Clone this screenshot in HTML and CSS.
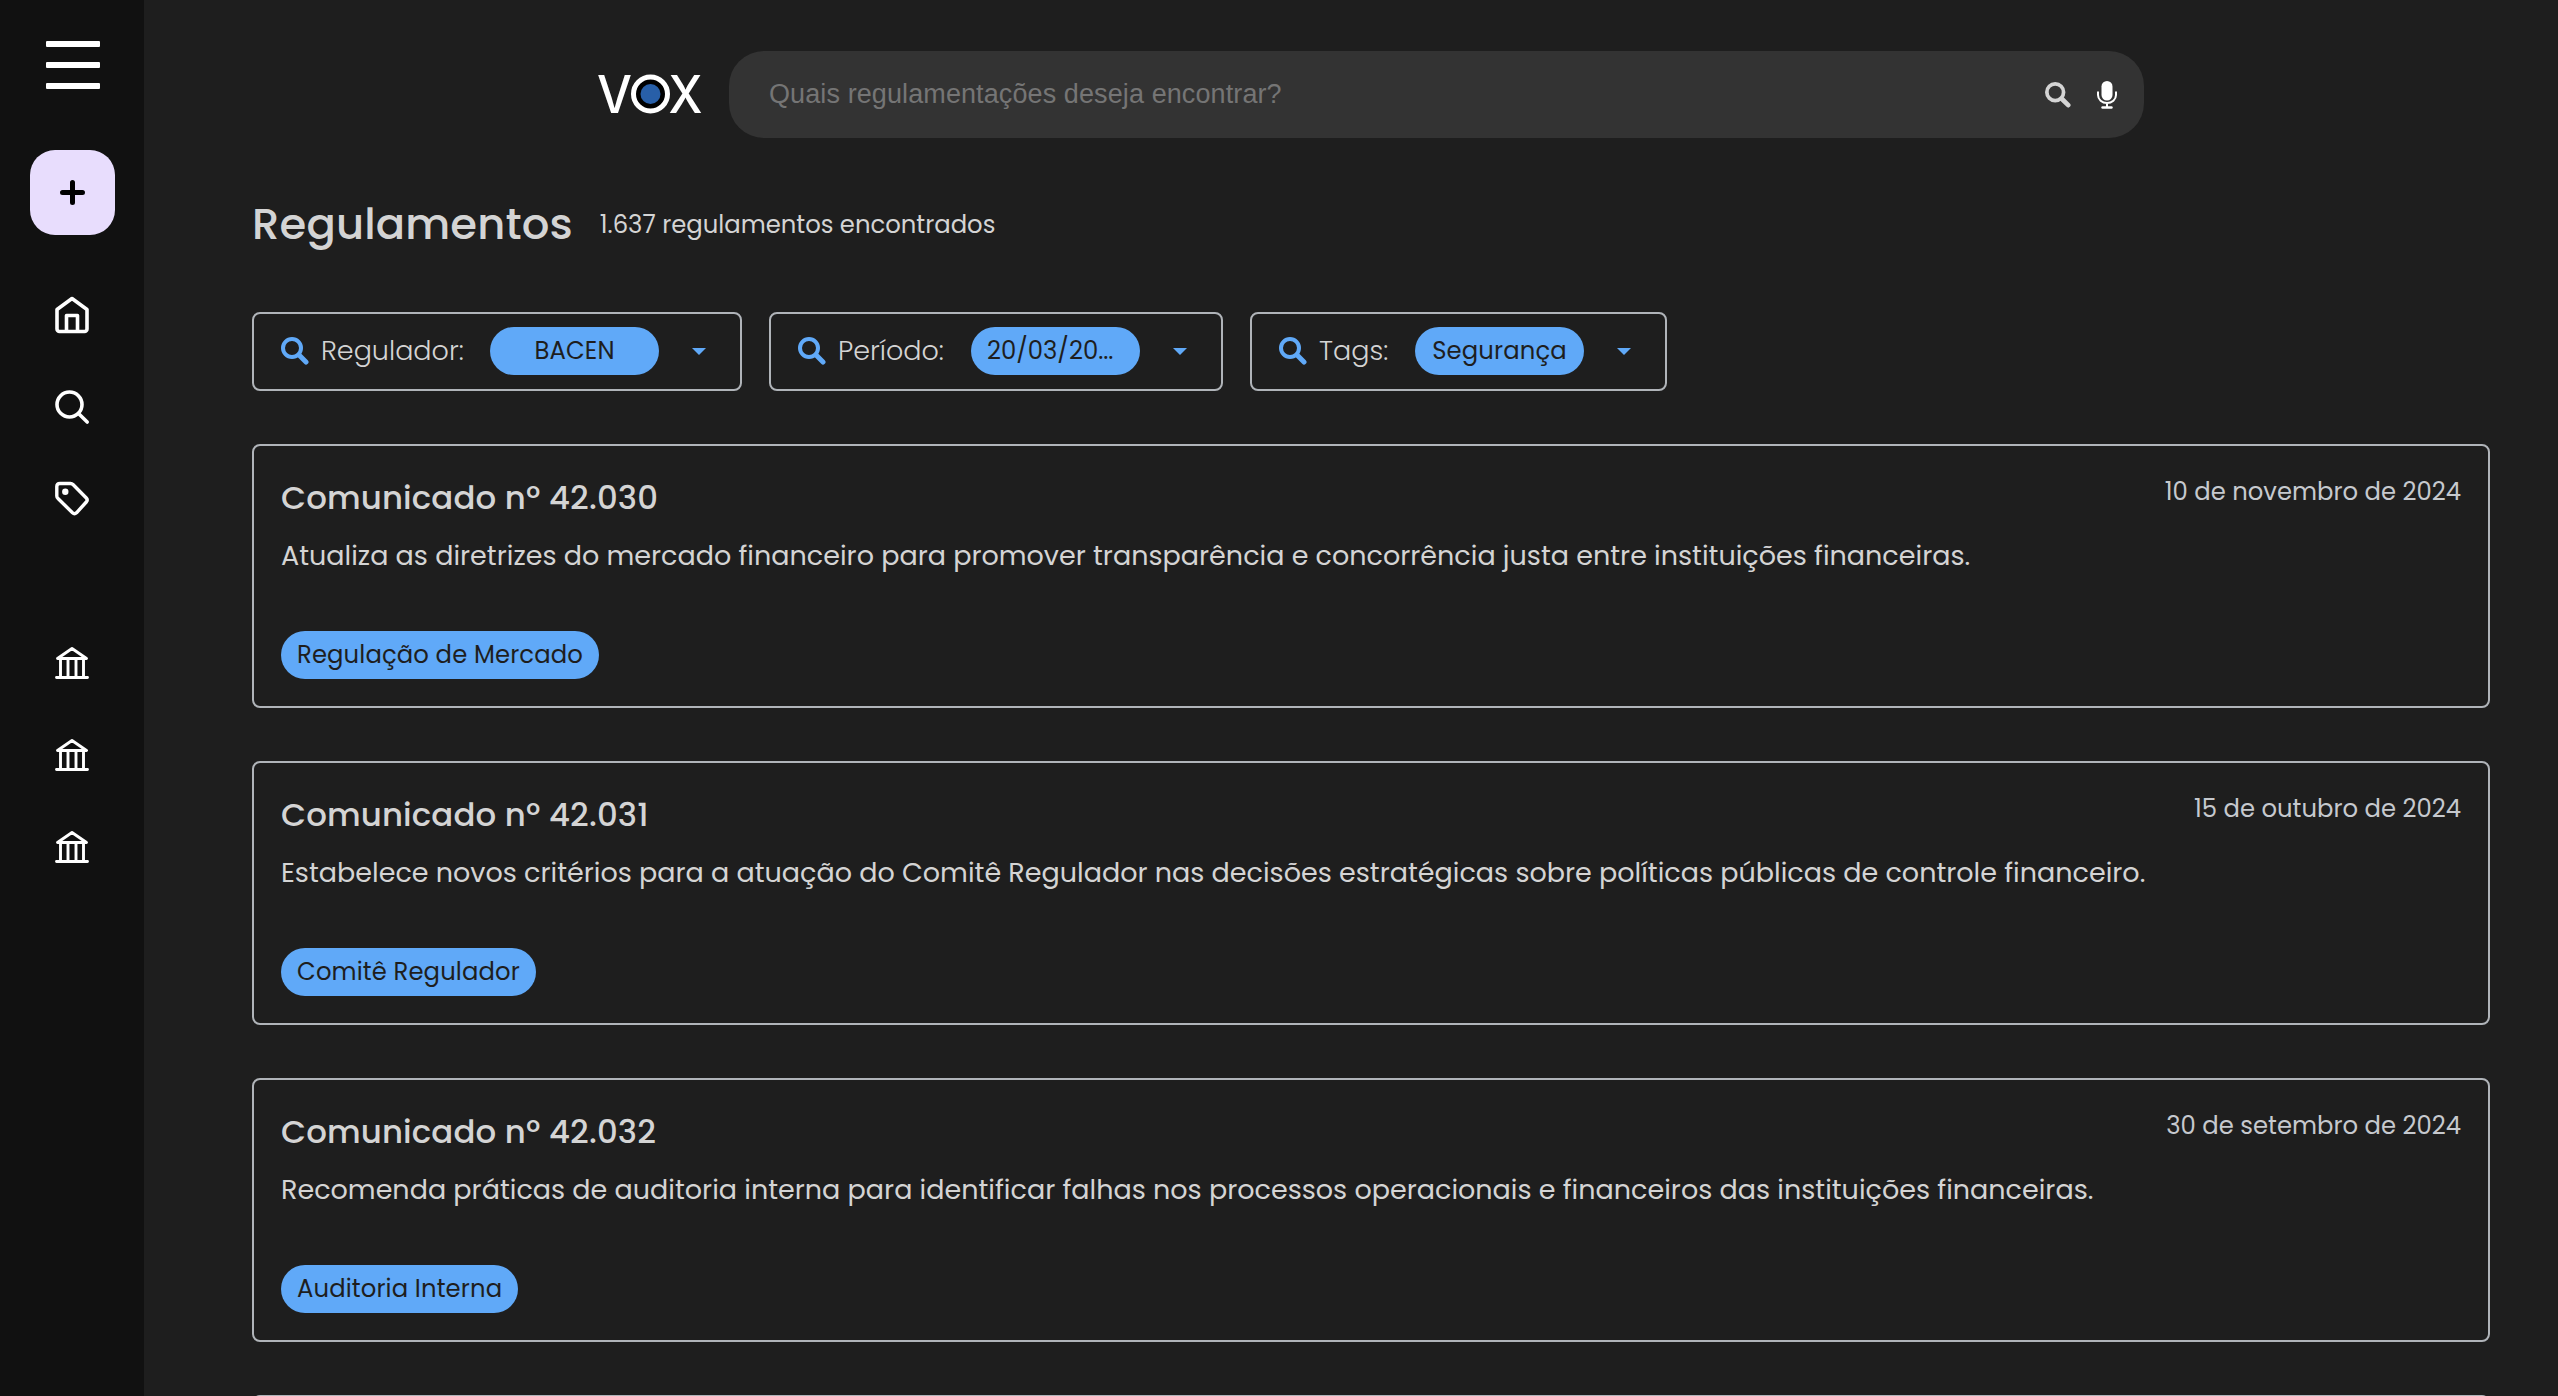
FILE: index.html
```html
<!DOCTYPE html>
<html lang="pt-BR">
<head>
<meta charset="utf-8">
<title>VOX – Regulamentos</title>
<link rel="stylesheet" href="styles.css">
</head>
<body>
<svg class="defs" aria-hidden="true">
  <symbol id="bank" viewBox="0 0 34 34">
    <path d="M2.500 12.500 17 2.500l14.500 10zM5.500 13v18M13 13v18M21 13v18M28.500 13v18M1.500 31.500h31" fill="none" stroke="currentColor" stroke-width="2.900" stroke-linejoin="round" stroke-linecap="round"/>
  </symbol>
  <symbol id="lens" viewBox="0 0 28 28">
    <circle cx="11" cy="11" r="9" fill="none" stroke="currentColor" stroke-width="4"/>
    <path d="M18.300 18.300 25 25" fill="none" stroke="currentColor" stroke-width="5" stroke-linecap="round"/>
  </symbol>
  <symbol id="caret" viewBox="0 0 14 7"><path d="M0 0h14L7 7z" fill="currentColor"/></symbol>
</svg>
<aside class="sidebar">
  <button class="burger" aria-label="Menu"><span></span><span></span><span></span></button>
  <button class="add" aria-label="Adicionar">
    <svg width="25" height="25" viewBox="0 0 25 25"><path d="M12.500 2.500v20M2.500 12.500h20" stroke="#000" stroke-width="5" stroke-linecap="round"/></svg>
  </button>
  <nav class="nav">
    <svg width="36" height="38" viewBox="0 0 36 38" fill="none" stroke="#fff" stroke-width="3.600" stroke-linejoin="round"><path d="M3 13.500 18 2.500l15 11V33a2.500 2.500 0 0 1-2.500 2.500h-25A2.500 2.500 0 0 1 3 33zM12.500 35V19.500h11V35"/></svg>
    <svg width="36" height="38" viewBox="0 0 36 38" fill="none" stroke="#fff" stroke-width="3.600" stroke-linecap="round"><circle cx="15.500" cy="16.500" r="12.500"/><path d="M24.500 25.500 33.200 34"/></svg>
    <svg width="36" height="38" viewBox="0 0 36 38" fill="none" stroke="#fff" stroke-width="3.400" stroke-linejoin="round"><path d="M6 3.500h10.500q1.500 0 2.500 1l13.300 13.500q1.800 2 0 4L22.500 32.800q-2 1.800-4 0L4 18.500q-1.200-1-1.200-2.500V6.500Q2.800 3.500 6 3.500z"/><circle cx="11.300" cy="11.800" r="3.200" fill="#fff" stroke="none"/></svg>
  </nav>
  <nav class="nav banks">
    <svg class="bank"><use href="#bank"/></svg>
    <svg class="bank"><use href="#bank"/></svg>
    <svg class="bank"><use href="#bank"/></svg>
  </nav>
</aside>
<main class="main">
  <header class="topbar">
    <svg class="logo" width="104" height="40" viewBox="0 0 104 40">
      <text x="-1" y="38.500" textLength="35" lengthAdjust="spacingAndGlyphs">V</text>
      <circle cx="52.500" cy="20" r="17" fill="#000" stroke="#fff" stroke-width="5"/>
      <circle cx="52.500" cy="20" r="10" fill="#285fa8"/>
      <text x="70.500" y="38.500" textLength="34" lengthAdjust="spacingAndGlyphs">X</text>
    </svg>
    <div class="search">
      <span class="placeholder">Quais regulamentações deseja encontrar?</span>
      <svg class="search-lens" width="26" height="26"><use href="#lens"/></svg>
      <svg width="20" height="28" viewBox="0 0 20 28" fill="none" stroke="#fff" stroke-width="2"><rect x="4.500" y="0" width="11" height="19.500" rx="5.500" fill="#fff" stroke="none"/><path d="M1 10.500V14a9 8 0 0 0 18 0v-3.500M10 22v4" /><path d="M5.500 26.500h9" stroke-width="2.400" stroke-linecap="round"/></svg>
    </div>
  </header>
  <div class="heading">
    <h1>Regulamentos</h1>
    <span class="count">1.637 regulamentos encontrados</span>
  </div>
  <div class="filters">
    <div class="filter regulator"><svg class="lens"><use href="#lens"/></svg><span class="label">Regulador:</span><span class="pill">BACEN</span><svg class="caret"><use href="#caret"/></svg></div>
    <div class="filter period"><svg class="lens"><use href="#lens"/></svg><span class="label">Período:</span><span class="pill">20/03/20...</span><svg class="caret"><use href="#caret"/></svg></div>
    <div class="filter tags"><svg class="lens"><use href="#lens"/></svg><span class="label">Tags:</span><span class="pill">Segurança</span><svg class="caret"><use href="#caret"/></svg></div>
  </div>
  <section class="list">
    <article class="card">
      <div class="card-head"><h2>Comunicado nº 42.030</h2><time>10 de novembro de 2024</time></div>
      <p>Atualiza as diretrizes do mercado financeiro para promover transparência e concorrência justa entre instituições financeiras.</p>
      <span class="tag">Regulação de Mercado</span>
    </article>
    <article class="card">
      <div class="card-head"><h2>Comunicado nº 42.031</h2><time>15 de outubro de 2024</time></div>
      <p>Estabelece novos critérios para a atuação do Comitê Regulador nas decisões estratégicas sobre políticas públicas de controle financeiro.</p>
      <span class="tag">Comitê Regulador</span>
    </article>
    <article class="card">
      <div class="card-head"><h2>Comunicado nº 42.032</h2><time>30 de setembro de 2024</time></div>
      <p>Recomenda práticas de auditoria interna para identificar falhas nos processos operacionais e financeiros das instituições financeiras.</p>
      <span class="tag">Auditoria Interna</span>
    </article>
    <article class="card"></article>
  </section>
</main>
</body>
</html>
```
FILE: styles.css
```css
* { box-sizing: border-box; }

body {
  margin: 0;
  height: 1396px;
  display: flex;
  overflow: hidden;
  background: #1e1e1e;
  color: #d4d4d4;
  font-family: Poppins, Inter, sans-serif;
}

svg { display: block; flex: none; }
.defs { width: 0; height: 0; position: absolute; }
button { border: 0; padding: 0; background: none; }

/* Sidebar */
.sidebar {
  width: 144px;
  height: 100%;
  flex: none;
  display: flex;
  flex-direction: column;
  align-items: center;
  padding-top: 41px;
  background: #111;
}
.burger {
  width: 54px;
  height: 48px;
  margin-left: 2px;
  display: flex;
  flex-direction: column;
  justify-content: space-between;
}
.burger span { height: 6px; border-radius: 1px; background: #fff; }
.add {
  width: 85px;
  height: 85px;
  margin-top: 61px;
  display: grid;
  place-items: center;
  border-radius: 25px;
  background: #e8ddfd;
}
.nav {
  margin-top: 61px;
  display: flex;
  flex-direction: column;
  align-items: center;
  gap: 54px;
  color: #fff;
}
.banks { margin-top: 128px; gap: 58px; }
.bank { width: 34px; height: 34px; }

/* Top bar */
.main {
  flex: 1;
  height: 100%;
  overflow: hidden;
  padding: 51px 68px 0 108px;
}
.topbar {
  display: flex;
  align-items: center;
  justify-content: center;
  gap: 27px;
}
.logo { overflow: visible; margin-top: -2px; }
.logo text { font: 500 52px Inter, sans-serif; fill: #fff; }
.search {
  width: 1415px;
  height: 87px;
  display: flex;
  align-items: center;
  padding: 0 27px 0 40px;
  border-radius: 35px;
  background: #333;
}
.placeholder {
  flex: 1;
  font: 27px "Liberation Sans", Arial, sans-serif;
  letter-spacing: .1px;
  color: #757575;
}
.search-lens { margin-right: 26px; color: #d4d4d4; }

/* Heading */
.heading {
  display: flex;
  align-items: center;
  gap: 27px;
  margin-top: 56px;
}
h1 {
  margin: 0;
  font-size: 43.3px;
  font-weight: 500;
  line-height: 60px;
  letter-spacing: .15px;
}
.count { font-size: 24.3px; }

/* Filters */
.filters { display: flex; gap: 27px; margin-top: 58px; }
.filter {
  height: 79px;
  display: flex;
  align-items: center;
  padding: 0 34px 1px 27px;
  border: 2px solid #b0b4b9;
  border-radius: 8px;
}
.regulator { width: 490px; }
.period { width: 454px; }
.tags { width: 417px; }
.lens { width: 28px; height: 28px; margin-right: 12px; color: #60a9f8; }
.label {
  flex: 1;
  font-size: 27px;
  font-weight: 300;
  white-space: nowrap;
}
.pill, .tag {
  height: 48px;
  padding: 0 16px;
  border-radius: 24px;
  background: #60a9f8;
  color: #1e1e1e;
  font-size: 24.3px;
  line-height: 48px;
  letter-spacing: .12px;
  white-space: nowrap;
}
.pill { width: 169px; text-align: center; line-height: 47px; }
.period .pill { text-align: left; letter-spacing: 0; }
.caret { width: 14px; height: 7px; margin-left: 33px; color: #60a9f8; }

/* Cards */
.list { margin-top: 53px; display: grid; gap: 53px; }
.card {
  height: 264px;
  padding: 31px 27px 0;
  border: 2px solid #b0b4b9;
  border-radius: 8px;
}
.card-head { display: flex; justify-content: space-between; align-items: flex-start; }
h2 {
  margin: 1px 0 0;
  font-size: 32.4px;
  font-weight: 500;
  line-height: 40px;
  letter-spacing: .13px;
}
time { font-size: 24.3px; line-height: 30px; color: #c6c9ce; }
.card p {
  margin: 18px 0 55px;
  font-size: 27px;
  line-height: 40px;
  white-space: nowrap;
}
.tag { display: inline-block; }
```
